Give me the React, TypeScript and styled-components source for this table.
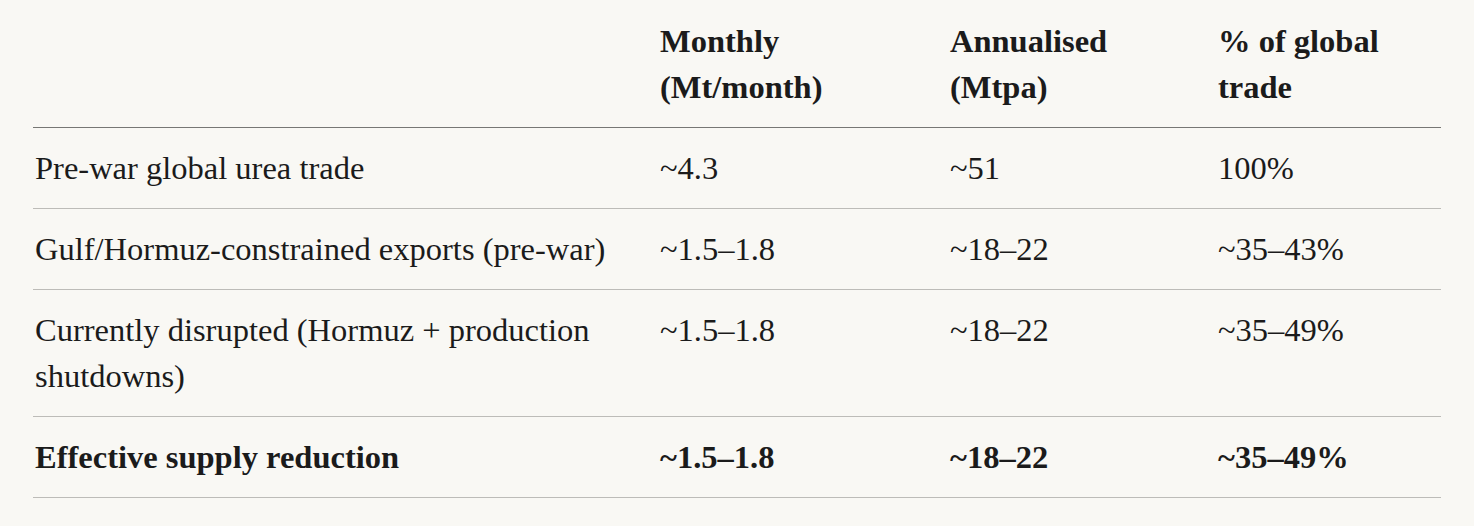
import React from "react";
import styled, { createGlobalStyle } from "styled-components";

const GlobalStyle = createGlobalStyle`
  html, body {
    margin: 0;
    padding: 0;
    background: #f9f8f4;
  }
  body {
    font-family: "Liberation Serif", "Times New Roman", serif;
    color: #1b1b1b;
  }
`;

const Wrapper = styled.div`
  padding: 0 33px;
`;

const Table = styled.table`
  width: 100%;
  border-collapse: collapse;
  table-layout: fixed;
  font-size: 32.5px;
  line-height: 46px;
`;

const HeadCell = styled.th`
  text-align: left;
  vertical-align: top;
  font-weight: 700;
  padding: 18px 16px 17px 2px;
  border-bottom: 1px solid #777774;
`;

const Row = styled.tr`
  border-bottom: 1px solid #bdbcb8;
`;

const Cell = styled.td<{ $strong?: boolean }>`
  vertical-align: top;
  padding: 17px 16px 17px 2px;
  font-weight: ${(p) => (p.$strong ? 700 : 400)};
`;

type Line = {
  label: string;
  monthly: string;
  annual: string;
  share: string;
  strong?: boolean;
};

const lines: Line[] = [
  { label: "Pre-war global urea trade", monthly: "~4.3", annual: "~51", share: "100%" },
  {
    label: "Gulf/Hormuz-constrained exports (pre-war)",
    monthly: "~1.5–1.8",
    annual: "~18–22",
    share: "~35–43%",
  },
  {
    label: "Currently disrupted (Hormuz + production shutdowns)",
    monthly: "~1.5–1.8",
    annual: "~18–22",
    share: "~35–49%",
  },
  {
    label: "Effective supply reduction",
    monthly: "~1.5–1.8",
    annual: "~18–22",
    share: "~35–49%",
    strong: true,
  },
];

export default function App() {
  return (
    <>
      <GlobalStyle />
      <Wrapper>
        <Table>
          <colgroup>
            <col style={{ width: 625 }} />
            <col style={{ width: 290 }} />
            <col style={{ width: 268 }} />
            <col />
          </colgroup>
          <thead>
            <tr>
              <HeadCell />
              <HeadCell>
                Monthly
                <br />
                (Mt/month)
              </HeadCell>
              <HeadCell>
                Annualised
                <br />
                (Mtpa)
              </HeadCell>
              <HeadCell>
                % of global
                <br />
                trade
              </HeadCell>
            </tr>
          </thead>
          <tbody>
            {lines.map((l) => (
              <Row key={l.label}>
                <Cell $strong={l.strong}>{l.label}</Cell>
                <Cell $strong={l.strong}>{l.monthly}</Cell>
                <Cell $strong={l.strong}>{l.annual}</Cell>
                <Cell $strong={l.strong}>{l.share}</Cell>
              </Row>
            ))}
          </tbody>
        </Table>
      </Wrapper>
    </>
  );
}
